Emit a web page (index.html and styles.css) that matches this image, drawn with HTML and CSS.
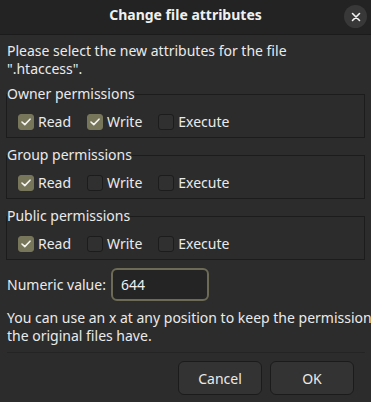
FILE: index.html
```html
<!DOCTYPE html>
<html lang="en">
<head>
<meta charset="utf-8">
<title>Change file attributes</title>
<link rel="stylesheet" href="styles.css">
</head>
<body>
<div class="dialog">
  <header class="titlebar">
    <h1 class="title">Change file attributes</h1>
    <button class="close" aria-label="Close">
      <svg width="10" height="10" viewBox="0 0 10 10"><path d="M1.5 1.5 L8.5 8.5 M8.5 1.5 L1.5 8.5" stroke="#f2f2f2" stroke-width="1.6" stroke-linecap="round" fill="none"/></svg>
    </button>
  </header>
  <main class="content">
    <p class="intro">Please select the new attributes for the file<br>".htaccess".</p>

    <fieldset class="group">
      <legend>Owner permissions</legend>
      <div class="row">
        <label class="check"><span class="box on"><svg width="10" height="8" viewBox="0 0 10 8"><path d="M1 4 L3.8 6.6 L9 1.2" stroke="#f4f4f0" stroke-width="1.6" fill="none" stroke-linecap="round" stroke-linejoin="round"/></svg></span>Read</label>
        <label class="check"><span class="box on"><svg width="10" height="8" viewBox="0 0 10 8"><path d="M1 4 L3.8 6.6 L9 1.2" stroke="#f4f4f0" stroke-width="1.6" fill="none" stroke-linecap="round" stroke-linejoin="round"/></svg></span>Write</label>
        <label class="check"><span class="box"></span>Execute</label>
      </div>
    </fieldset>

    <fieldset class="group">
      <legend>Group permissions</legend>
      <div class="row">
        <label class="check"><span class="box on"><svg width="10" height="8" viewBox="0 0 10 8"><path d="M1 4 L3.8 6.6 L9 1.2" stroke="#f4f4f0" stroke-width="1.6" fill="none" stroke-linecap="round" stroke-linejoin="round"/></svg></span>Read</label>
        <label class="check"><span class="box"></span>Write</label>
        <label class="check"><span class="box"></span>Execute</label>
      </div>
    </fieldset>

    <fieldset class="group">
      <legend>Public permissions</legend>
      <div class="row">
        <label class="check"><span class="box on"><svg width="10" height="8" viewBox="0 0 10 8"><path d="M1 4 L3.8 6.6 L9 1.2" stroke="#f4f4f0" stroke-width="1.6" fill="none" stroke-linecap="round" stroke-linejoin="round"/></svg></span>Read</label>
        <label class="check"><span class="box"></span>Write</label>
        <label class="check"><span class="box"></span>Execute</label>
      </div>
    </fieldset>

    <div class="numeric">
      <span class="numeric-label">Numeric value:</span>
      <div class="entry">644</div>
    </div>

    <p class="hint">You can use an x at any position to keep the permission<br>the original files have.</p>
  </main>
  <footer class="actions">
    <button class="btn">Cancel</button>
    <button class="btn">OK</button>
  </footer>
</div>
</body>
</html>
```

FILE: styles.css
```css
* { box-sizing: border-box; }

html, body {
  margin: 0;
  padding: 0;
  background: #2c2c2c;
}

body {
  font-family: "Noto Sans", "Open Sans", sans-serif;
  font-size: 14px;
  line-height: 18px;
  color: #eaeaea;
  width: 371px;
  height: 402px;
  overflow: hidden;
}

.dialog {
  display: flex;
  flex-direction: column;
  height: 402px;
}

.titlebar {
  height: 35px;
  background: #232323;
  border-bottom: 1px solid #1b1b1b;
  display: flex;
  align-items: center;
  justify-content: center;
  position: relative;
}

.title {
  margin: 0;
  font-size: 14px;
  font-weight: 700;
  color: #f0f0f0;
  line-height: 18px;
  margin-top: -4px;
}

.close {
  position: absolute;
  right: 4px;
  top: 5px;
  width: 23px;
  height: 23px;
  border-radius: 50%;
  border: none;
  padding: 0;
  background: #383838;
  display: flex;
  align-items: center;
  justify-content: center;
}

.content {
  padding: 7px 6px 0 6px;
  display: flex;
  flex-direction: column;
}

.intro {
  margin: 0 0 7px 1px;
}

.group {
  margin: 0 0 8px 0;
  padding: 11px 0 7px 11px;
  border: 1px solid #1c1c1c;
  min-width: 0;
}

.group legend {
  padding: 0;
  margin-left: -11px;
  color: #eaeaea;
}

.row {
  display: flex;
  gap: 16px;
  height: 16px;
  align-items: center;
}

.check {
  display: flex;
  align-items: center;
  gap: 4px;
  line-height: 16px;
}

.box {
  width: 16px;
  height: 16px;
  border-radius: 3px;
  background: #303030;
  border: 1px solid #1c1c1c;
  display: flex;
  align-items: center;
  justify-content: center;
}

.box.on {
  background: #77755a;
  border-color: #77755a;
}

.numeric {
  display: flex;
  align-items: center;
  gap: 5px;
  margin-top: 0;
  padding-left: 1px;
}

.entry {
  width: 98px;
  height: 33px;
  border: 2px solid #6d6b55;
  border-radius: 6px;
  background: #242424;
  padding-left: 8px;
  display: flex;
  align-items: center;
  color: #f0f0f0;
}

.hint {
  margin: 8px 0 0 1px;
  white-space: nowrap;
  padding-bottom: 7px;
  border-bottom: 1px solid #242424;
}

.actions {
  display: flex;
  justify-content: flex-end;
  gap: 8px;
  padding: 8px 17px 0 0;
}

.btn {
  width: 84px;
  height: 34px;
  font-family: inherit;
  font-size: 14px;
  color: #eaeaea;
  background: #333333;
  border: 1px solid #1b1b1b;
  border-radius: 6px;
}
```
